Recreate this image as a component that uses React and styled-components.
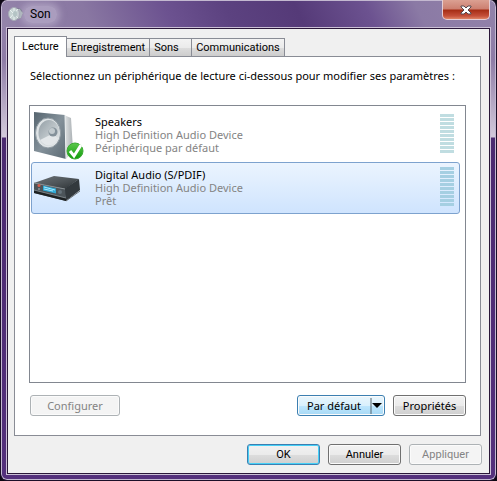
import React, { useState } from 'react';
import styled, { createGlobalStyle, css } from 'styled-components';

const tabs = ['Lecture', 'Enregistrement', 'Sons', 'Communications'];

const devices = [
  { id: 'speakers', name: 'Speakers', driver: 'High Definition Audio Device', status: 'Périphérique par défaut' },
  { id: 'spdif', name: 'Digital Audio (S/PDIF)', driver: 'High Definition Audio Device', status: 'Prêt' },
];

const levels = [0, 1, 2, 3, 4, 5, 6, 7, 8, 9];

function TitleIcon() {
  return (
    <svg width="16" height="16" viewBox="0 0 16 16" aria-hidden="true">
      <path d="M8 2l5 1 2 4-2 5-5 2z" fill="#6f7082" />
      <path d="M12 3l1 2 2 2-1 2-1 3-3 1V3z" fill="#a9b6b8" />
      <ellipse cx="6" cy="8" rx="5.5" ry="6.5" fill="#c6d2d2" stroke="#a7a9b6" />
      <path d="M2 4l8 8M2 12l8-9M6 2v12" stroke="#e8f0f0" />
      <ellipse cx="7" cy="8" rx="2" ry="3" fill="#b4c4c5" />
    </svg>
  );
}

function SpeakerIcon() {
  return (
    <svg width="52" height="50" viewBox="0 0 52 50" aria-hidden="true">
      <defs>
        <linearGradient id="spkFront" x1="0" y1="0" x2="1" y2="1">
          <stop offset="0" stopColor="#56656f" />
          <stop offset="0.5" stopColor="#84919a" />
          <stop offset="1" stopColor="#5b6a73" />
        </linearGradient>
        <linearGradient id="spkSide" x1="0" y1="0" x2="1" y2="0">
          <stop offset="0" stopColor="#e4e7e8" />
          <stop offset="1" stopColor="#a9afb3" />
        </linearGradient>
        <linearGradient id="spkCone" x1="0" y1="0" x2="1" y2="1">
          <stop offset="0" stopColor="#939ea5" />
          <stop offset="0.5" stopColor="#bcc4c8" />
          <stop offset="1" stopColor="#eef1f2" />
        </linearGradient>
        <linearGradient id="okBadge" x1="0" y1="0" x2="0" y2="1">
          <stop offset="0" stopColor="#5cc84b" />
          <stop offset="1" stopColor="#119c0c" />
        </linearGradient>
      </defs>
      <path d="M30 4l7 3 2 32-7 9z" fill="url(#spkSide)" />
      <path d="M0 1l31 3 1 44L0 40z" fill="url(#spkFront)" />
      <path d="M31 4l1 44" stroke="#edf0f1" />
      <ellipse cx="14" cy="22" rx="12.5" ry="15" fill="#dfe4e6" stroke="#919ca3" />
      <ellipse cx="15" cy="22" rx="10.5" ry="13" fill="url(#spkCone)" />
      <path d="M6 29l12-6 6 4c-3 8-12 11-18 2z" fill="#e3e7e9" />
      <circle cx="19" cy="21" r="4.5" fill="#84919a" />
      <circle cx="18" cy="20" r="3" fill="#c3cbcf" />
      <circle cx="41" cy="40" r="8" fill="url(#okBadge)" stroke="#3daa34" />
      <path d="M36 40l4 5 7-11" fill="none" stroke="#fff" strokeWidth="3" />
    </svg>
  );
}

function ReceiverIcon() {
  return (
    <svg width="52" height="50" viewBox="0 0 52 50" aria-hidden="true">
      <defs>
        <linearGradient id="rcvTop" x1="0" y1="0" x2="1" y2="1">
          <stop offset="0" stopColor="#6b7276" />
          <stop offset="0.5" stopColor="#50565a" />
          <stop offset="1" stopColor="#2c3134" />
        </linearGradient>
      </defs>
      <path d="M0 19l20-7 25 3-14 10z" fill="url(#rcvTop)" />
      <path d="M30 25l15-10 1 11-14 11z" fill="#33393d" />
      <path d="M0 19l31 6 1 12-32-8z" fill="#4c5459" />
      <path d="M0 26l32 8v3L0 29z" fill="#1d2123" />
      <path d="M0 19l31 6" stroke="#868d91" />
      <path d="M0 26l32 8" stroke="#7a8287" />
      <path d="M9 21.5l13 3v5l-13-3z" fill="#2fa9d6" />
      <path d="M10 23l11 3M10 25l9 2" stroke="#a9eaff" />
      <circle cx="5" cy="21.5" r="1.5" fill="#d75b49" />
      <circle cx="5" cy="25" r="1" fill="#8a969b" />
      <circle cx="26" cy="28" r="2" fill="#66727a" />
      <path d="M32 37l14-10" stroke="#6c7174" />
    </svg>
  );
}

function App() {
  const [activeTab, setActiveTab] = useState('Lecture');
  const [selected, setSelected] = useState('spdif');

  return (
    <>
      <GlobalStyle />
      <Window>
        <TitleBar>
          <TitleIcon />
          <Title>Son</Title>
          <CloseButton aria-label="Fermer">
            <svg width="12" height="10" viewBox="0 0 12 10" aria-hidden="true">
              <path d="M1 1h3l2 2 2-2h3v1L8 5l3 3v1H8L6 7 4 9H1V8l3-3-3-3z" fill="#fff" stroke="#56494e" />
            </svg>
          </CloseButton>
        </TitleBar>
        <Client>
          <TabList role="tablist">
            {tabs.map((tab) => (
              <Tab key={tab} role="tab" aria-selected={tab === activeTab} $active={tab === activeTab} onClick={() => setActiveTab(tab)}>
                {tab}
              </Tab>
            ))}
          </TabList>
          <Panel role="tabpanel">
            <Instruction>Sélectionnez un périphérique de lecture ci-dessous pour modifier ses paramètres :</Instruction>
            <DeviceList>
              {devices.map((device) => (
                <Device key={device.id} $selected={device.id === selected} aria-pressed={device.id === selected} onClick={() => setSelected(device.id)}>
                  {device.id === 'speakers' ? <SpeakerIcon /> : <ReceiverIcon />}
                  <DeviceText>
                    <DeviceName>{device.name}</DeviceName>
                    <span>{device.driver}</span>
                    <span>{device.status}</span>
                  </DeviceText>
                  <Meter>
                    {levels.map((level) => (
                      <MeterBar key={level} $selected={device.id === selected} />
                    ))}
                  </Meter>
                </Device>
              ))}
            </DeviceList>
            <PanelButtons>
              <ConfigureButton disabled>Configurer</ConfigureButton>
              <DefaultButton>
                <DefaultLabel>Par défaut</DefaultLabel>
                <svg width="14" height="16" viewBox="0 0 14 16" aria-hidden="true">
                  <path d="M1 0v16" stroke="#55626b" />
                  <path d="M2 5h10L7 10z" fill="#000" />
                </svg>
              </DefaultButton>
              <Button>Propriétés</Button>
            </PanelButtons>
          </Panel>
          <Footer>
            <OkButton>OK</OkButton>
            <FooterButton>Annuler</FooterButton>
            <FooterButton disabled>Appliquer</FooterButton>
          </Footer>
        </Client>
      </Window>
    </>
  );
}

export default App;

const GlobalStyle = createGlobalStyle`
  * {
    box-sizing: border-box;
  }

  body {
    margin: 0;
    background: #0c0712;
    font-family: 'Noto Sans', 'Open Sans', sans-serif;
    font-size: 11px;
    line-height: 13px;
    color: #000;
  }

  button {
    font: inherit;
    color: inherit;
    white-space: nowrap;
  }
`;

const Window = styled.div`
  display: flex;
  flex-direction: column;
  min-height: 100vh;
  padding: 0 6px 6px;
  border: 1px solid #1b0f28;
  border-top: 0;
  border-radius: 7px;
  background: linear-gradient(#9685ad 0, #8e7ca6 60px, #d3cadb 137px, #4b2a70 138px, #54307c 100%);
  box-shadow: inset 0 0 0 1px #c3b8d0;
`;

const TitleBar = styled.div`
  display: flex;
  align-items: flex-start;
  height: 27px;
  margin: 1px -5px 0;
  padding: 5px 5px 0 6px;
  border-radius: 6px 6px 0 0;
  background: linear-gradient(65deg, #9484aa 0%, #8977a2 18%, #6c5290 34%, #5c4280 46%, #553a78 60%, #6c5290 74%, #8b7aa5 84%, #9282aa 100%);
`;

const Title = styled.span`
  padding: 2px 6px;
  border-radius: 8px;
  background: rgba(200, 190, 215, 0.5);
  box-shadow: 0 0 6px 3px rgba(200, 190, 215, 0.5);
  font-family: Roboto, 'Open Sans', sans-serif;
  font-size: 12px;
`;

const CloseButton = styled.button`
  display: flex;
  align-items: center;
  justify-content: center;
  width: 48px;
  height: 20px;
  margin: -6px 0 0 auto;
  padding: 0;
  border: 1px solid #e5cdd3;
  border-top: 0;
  border-radius: 0 0 5px 5px;
  background: linear-gradient(#dba092 0, #cc7f70 9px, #a52c14 10px, #c5503a 16px, #df8465 100%);
`;

const Client = styled.div`
  display: flex;
  flex: 1;
  flex-direction: column;
  padding: 7px 7px 8px 6px;
  border: 1px solid #2a1739;
  outline: 1px solid #cbbfd6;
  background: #f0f0f0;
`;

const TabList = styled.div`
  display: flex;
  align-items: flex-end;
`;

const Tab = styled.button`
  min-width: 43px;
  height: 19px;
  margin: 0 0 -1px -1px;
  padding: 0 4px;
  border: 1px solid #898c95;
  background: linear-gradient(#f3f3f3 0, #ebebeb 50%, #dddddd 51%, #cdcdcd 100%);
  font-family: Roboto, 'Open Sans', sans-serif;
  font-size: 11px;
  text-align: left;

  ${({ $active }) => $active && css`
    z-index: 1;
    height: 21px;
    margin-left: 0;
    padding: 0 7px 2px;
    border-bottom: 0;
    background: #fff;
  `}
`;

const Panel = styled.div`
  display: flex;
  flex: 1;
  flex-direction: column;
  margin-right: 1px;
  padding: 12px 14px 19px;
  border: 1px solid #898c95;
  background: #fff;
`;

const Instruction = styled.p`
  margin: 0 0 23px 1px;
`;

const DeviceList = styled.div`
  display: flex;
  flex: 1;
  flex-direction: column;
  padding: 3px 5px 0 1px;
  border: 1px solid #828790;
`;

const Device = styled.button`
  display: flex;
  align-items: flex-start;
  height: 53px;
  padding: 1px 5px 0 2px;
  border: 1px solid transparent;
  border-radius: 3px;
  background: transparent;
  text-align: left;

  ${({ $selected }) => $selected && css`
    height: 52px;
    border-color: #7da2ce;
    background: linear-gradient(#ebf4fe, #cfe4fe);
  `}
`;

const DeviceText = styled.span`
  display: flex;
  flex: 1;
  flex-direction: column;
  padding: 4px 0 0 9px;
  color: #848484;
`;

const DeviceName = styled.span`
  color: #000;
`;

const Meter = styled.span`
  display: flex;
  flex-direction: column;
  gap: 1px;
  padding-top: 3px;
`;

const MeterBar = styled.span`
  width: 14px;
  height: 3px;
  background: ${({ $selected }) => ($selected ? '#a5cfe2' : '#c0dde1')};
`;

const PanelButtons = styled.div`
  display: flex;
  margin-top: 12px;
`;

const Button = styled.button`
  width: 73px;
  height: 21px;
  padding: 0;
  border: 1px solid #707070;
  border-radius: 3px;
  background: linear-gradient(#f2f2f2 0, #ebebeb 50%, #dddddd 51%, #cfcfcf 100%);
  box-shadow: inset 0 0 0 1px #fbfbfb;

  &:disabled {
    border-color: #adb2b5;
    background: #f4f4f4;
    color: #838383;
  }
`;

const ConfigureButton = styled(Button)`
  width: 90px;
  margin: 0 auto 0 1px;
`;

const DefaultButton = styled(Button)`
  display: flex;
  align-items: center;
  width: 88px;
  margin-right: 8px;
  border-color: #3c7fb1;
  background: linear-gradient(#eaf6fd 0, #d9f0fc 50%, #bee6fd 51%, #a7d9f5 100%);
`;

const DefaultLabel = styled.span`
  flex: 1;
`;

const FooterButton = styled(Button)`
  font-family: Roboto, 'Open Sans', sans-serif;
`;

const OkButton = styled(FooterButton)`
  border-color: #3c7fb1;
  box-shadow: inset 0 0 0 1px #46d0f7;
`;

const Footer = styled.div`
  display: flex;
  justify-content: flex-end;
  gap: 8px;
  padding-top: 8px;
`;
